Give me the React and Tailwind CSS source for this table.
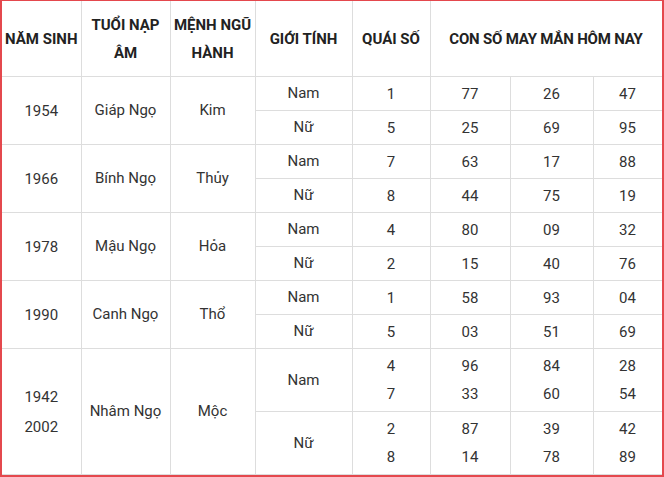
const ROWS = [
  { year: ["1954"], tuoi: "Giáp Ngọ", menh: "Kim", g: [
    { s: "Nam", q: ["1"], n: [["77"], ["26"], ["47"]] },
    { s: "Nữ", q: ["5"], n: [["25"], ["69"], ["95"]] },
  ] },
  { year: ["1966"], tuoi: "Bính Ngọ", menh: "Thủy", g: [
    { s: "Nam", q: ["7"], n: [["63"], ["17"], ["88"]] },
    { s: "Nữ", q: ["8"], n: [["44"], ["75"], ["19"]] },
  ] },
  { year: ["1978"], tuoi: "Mậu Ngọ", menh: "Hỏa", g: [
    { s: "Nam", q: ["4"], n: [["80"], ["09"], ["32"]] },
    { s: "Nữ", q: ["2"], n: [["15"], ["40"], ["76"]] },
  ] },
  { year: ["1990"], tuoi: "Canh Ngọ", menh: "Thổ", g: [
    { s: "Nam", q: ["1"], n: [["58"], ["93"], ["04"]] },
    { s: "Nữ", q: ["5"], n: [["03"], ["51"], ["69"]] },
  ] },
  { year: ["1942", "2002"], tuoi: "Nhâm Ngọ", menh: "Mộc", g: [
    { s: "Nam", q: ["4", "7"], n: [["96", "33"], ["84", "60"], ["28", "54"]] },
    { s: "Nữ", q: ["2", "8"], n: [["87", "14"], ["39", "78"], ["42", "89"]] },
  ] },
];

const td = "border border-[#dddddd] text-center align-middle p-0";
const th = "border border-[#dddddd] text-center align-middle p-0 font-bold text-[#222] leading-[28px]";

function Lines({ items, lh = "leading-[28px]" }) {
  return items.map((t, i) => <div key={i} className={lh}>{t}</div>);
}

export default function App() {
  return (
    <div className="w-[664px] h-[477px] overflow-hidden bg-white border-l-2 border-r-2 border-t border-b-2 border-[#e4484d]"
      style={{ fontFamily: "Roboto, 'Noto Sans', sans-serif" }}>
      <table className="table-fixed border-collapse w-[660px] text-[15px] text-[#333] -mt-px">
        <colgroup>
          <col className="w-[79px]" />
          <col className="w-[89px]" />
          <col className="w-[85px]" />
          <col className="w-[97px]" />
          <col className="w-[78px]" />
          <col className="w-[80px]" />
          <col className="w-[83px]" />
          <col className="w-[69px]" />
        </colgroup>
        <thead>
          <tr className="h-[76px]">
            <th className={`${th} border-l-0`}>NĂM SINH</th>
            <th className={th}>TUỔI NẠP<br />ÂM</th>
            <th className={th}>MỆNH NGŨ<br />HÀNH</th>
            <th className={th}>GIỚI TÍNH</th>
            <th className={th}>QUÁI SỐ</th>
            <th className={`${th} tracking-[-0.2px]`} colSpan={3}>CON SỐ MAY MẮN HÔM NAY</th>
          </tr>
        </thead>
        <tbody>
          {ROWS.map((r) => {
            const multi = r.year.length > 1;
            const h = multi ? "h-[63px]" : "h-[34px]";
            return r.g.map((g, gi) => (
              <tr key={r.tuoi + gi} className={h}>
                {gi === 0 && (
                  <>
                    <td rowSpan={2} className={`${td} border-l-0`}>
                      <Lines items={r.year} lh="leading-[30px]" />
                    </td>
                    <td rowSpan={2} className={td}>{r.tuoi}</td>
                    <td rowSpan={2} className={td}>{r.menh}</td>
                  </>
                )}
                <td className={td}>{g.s}</td>
                <td className={td}><Lines items={g.q} /></td>
                {g.n.map((col, ci) => (
                  <td key={ci} className={td}><Lines items={col} /></td>
                ))}
              </tr>
            ));
          })}
        </tbody>
      </table>
    </div>
  );
}
